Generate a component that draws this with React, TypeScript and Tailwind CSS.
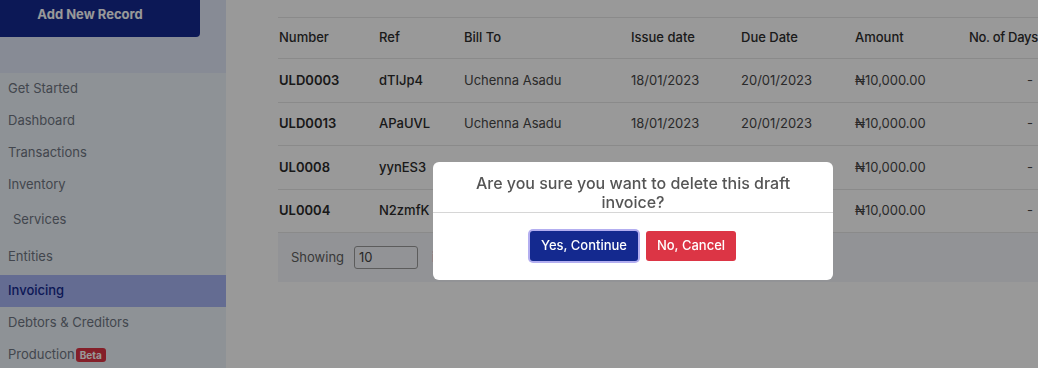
import React from "react";

const navItems = [
  { label: "Get Started", h: "h-[32px]" },
  { label: "Dashboard", h: "h-[32px]" },
  { label: "Transactions", h: "h-[32px]" },
  { label: "Inventory", h: "h-[32px]" },
  { label: "Services", h: "h-[37px]", sub: true },
  { label: "Entities", h: "h-[37px]" },
  { label: "Invoicing", h: "h-[32px]", active: true },
  { label: "Debtors & Creditors", h: "h-[32px]" },
  { label: "Production", h: "h-[32px]", beta: true },
];

const rows = [
  { num: "ULD0003", ref: "dTIJp4", to: "Uchenna Asadu", issue: "18/01/2023", due: "20/01/2023", h: "h-[44px]" },
  { num: "ULD0013", ref: "APaUVL", to: "Uchenna Asadu", issue: "18/01/2023", due: "20/01/2023", h: "h-[43px]" },
  { num: "UL0008", ref: "yynES3", to: "Uchenna Asadu", issue: "18/01/2023", due: "20/01/2023", h: "h-[44px]" },
  { num: "UL0004", ref: "N2zmfK", to: "Uchenna Asadu", issue: "18/01/2023", due: "20/01/2023", h: "h-[43px]" },
];

const cols = "grid grid-cols-[100px_85px_167px_110px_114px_114px_1fr] items-center";

const Sidebar = () => {
  return (
    <aside className="w-[226px] shrink-0 bg-[#edf3fa] flex flex-col overflow-hidden">
      <div className="h-[73px] shrink-0 bg-[#e1e8f8]">
        <button className="w-[200px] h-[37px] bg-[#14298f] rounded-br-[4px] text-white text-[13px] font-bold pr-[20px] pb-[8px]">
          Add New Record
        </button>
      </div>
      {navItems.map((item) => (
        <div
          key={item.label}
          className={`${item.h} shrink-0 flex items-center text-[13px] ${item.sub ? "pl-[13px]" : "pl-[8px]"} ${
            item.active ? "bg-[#a7b4f3] text-[#14298f] font-medium" : "text-[#6f7682]"
          }`}
        >
          {item.label}
          {item.beta && (
            <span className="ml-[1px] bg-[#dc3545] text-white text-[10px] font-bold rounded-[3px] px-[4px] leading-[14px]">
              Beta
            </span>
          )}
        </div>
      ))}
    </aside>
  );
};

const InvoiceTable = () => {
  return (
    <main className="flex-1 bg-white pt-[17px] pl-[52px] overflow-hidden">
      <div className="border-t border-[#e6e6e6]">
        <div className={`${cols} h-[41px] border-b border-[#e6e6e6] text-[13px] font-medium text-[#2d2d2d] pl-[1px]`}>
          <span>Number</span>
          <span>Ref</span>
          <span>Bill To</span>
          <span>Issue date</span>
          <span>Due Date</span>
          <span>Amount</span>
          <span className="whitespace-nowrap tracking-[-0.3px]">No. of Days</span>
        </div>
        {rows.map((r) => (
          <div key={r.num} className={`${cols} ${r.h} border-b border-[#e6e6e6] text-[13px] text-[#474747] pl-[1px]`}>
            <span className="font-semibold text-[#2b2b2b]">{r.num}</span>
            <span className="font-medium text-[#2b2b2b]">{r.ref}</span>
            <span>{r.to}</span>
            <span>{r.issue}</span>
            <span>{r.due}</span>
            <span>₦10,000.00</span>
            <span className="text-right pr-[5px]">-</span>
          </div>
        ))}
        <div className="h-[49px] bg-[#f3f5fa] flex items-center pl-[13px] text-[13px] text-[#606060]">
          <span>Showing</span>
          <div className="ml-[10px] w-[64px] h-[23px] border border-[#9a9a9a] rounded-[3px] flex items-center pl-[4px] text-[#444]">
            10
          </div>
          <span className="ml-[14px] text-[#6b21a8]">items per page</span>
        </div>
      </div>
    </main>
  );
};

const ConfirmModal = () => {
  return (
    <div className="fixed inset-0 bg-black/40 flex justify-center items-start pl-[228px] pt-[162px]">
      <div className="w-[400px] bg-white rounded-[6px] overflow-hidden">
        <p className="pt-[12px] px-[30px] text-center text-[16px] leading-[19px] font-medium text-[#555] border-b border-[#d6d6d6]">
          Are you sure you want to delete this draft invoice?
        </p>
        <div className="flex justify-center gap-[8px] pt-[18px] pb-[19px]">
          <button className="w-[108px] h-[30px] rounded-[3px] bg-[#14298f] text-white text-[13px] font-medium ring-2 ring-[#b3aef0]">
            Yes, Continue
          </button>
          <button className="w-[90px] h-[30px] rounded-[3px] bg-[#dc3545] text-white text-[13px] font-medium">
            No, Cancel
          </button>
        </div>
      </div>
    </div>
  );
};

export default function App() {
  return (
    <div className="relative w-[1038px] h-[368px] overflow-hidden flex font-['Inter',sans-serif]">
      <Sidebar />
      <InvoiceTable />
      <ConfirmModal />
    </div>
  );
}
